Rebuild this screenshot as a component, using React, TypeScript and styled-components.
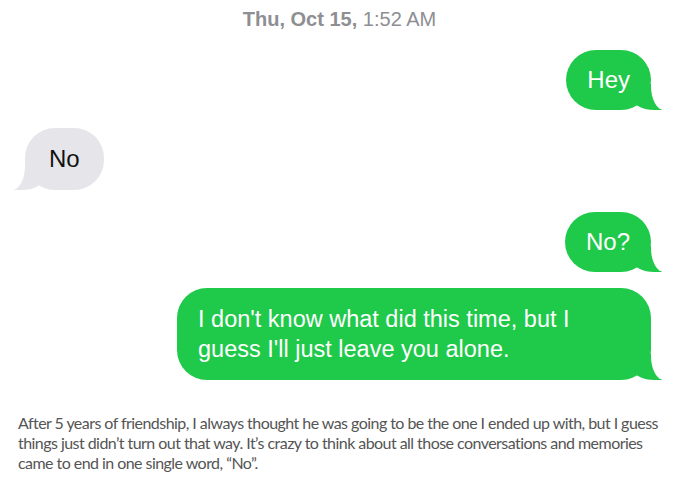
import * as React from 'react'
import styled, { createGlobalStyle } from 'styled-components'

const GlobalStyle = createGlobalStyle`
	html, body {
		margin: 0;
		padding: 0;
		background: #ffffff;
	}
`

const GREEN = '#1fc94a'
const GRAY = '#e5e5ea'

const Page = styled.div`
	width: 679px;
	height: 490px;
	overflow: hidden;
	background: #ffffff;
	font-family: 'Liberation Sans', Arial, sans-serif;
`

const Timestamp = styled.div`
	padding-top: 6px;
	height: 26px;
	text-align: center;
	font-size: 20px;
	line-height: 26px;
	color: #8e8e93;

	b {
		font-weight: 700;
	}
`

const Thread = styled.div`
	display: flex;
	flex-direction: column;
	padding: 0 28px 0 25px;
`

type RowProps = { $mine: boolean; $gap: number }
const Row = styled.div<RowProps>`
	display: flex;
	justify-content: ${props => (props.$mine ? 'flex-end' : 'flex-start')};
	margin-top: ${props => props.$gap}px;
`

// bubble with an iMessage style tail drawn by two pseudo elements
type BubbleProps = { $mine: boolean; $width?: number }
const Bubble = styled.div<BubbleProps>`
	position: relative;
	box-sizing: border-box;
	${props => (props.$width ? `width: ${props.$width}px;` : '')}
	padding: ${props => (props.$mine ? '16px 21px' : '17px 24px')};
	border-radius: 30px;
	background: ${props => (props.$mine ? GREEN : GRAY)};
	color: ${props => (props.$mine ? '#ffffff' : '#111111')};
	font-size: 24px;
	line-height: 28px;

	&::before {
		content: '';
		position: absolute;
		bottom: 0;
		${props => (props.$mine ? 'right: -11px;' : 'left: -11px;')}
		width: 28px;
		height: 26px;
		background: ${props => (props.$mine ? GREEN : GRAY)};
		${props =>
			props.$mine
				? 'border-bottom-left-radius: 20px 10px;'
				: 'border-bottom-right-radius: 20px 10px;'}
		z-index: 0;
	}

	&::after {
		content: '';
		position: absolute;
		bottom: 0;
		${props => (props.$mine ? 'right: -24px;' : 'left: -24px;')}
		width: 24px;
		height: 28px;
		background: #ffffff;
		${props =>
			props.$mine
				? 'border-bottom-left-radius: 13px 24px;'
				: 'border-bottom-right-radius: 13px 24px;'}
		z-index: 1;
	}
`

const BubbleText = styled.span`
	position: relative;
	z-index: 2;
`

const LongText = styled(BubbleText)`
	display: block;
	font-size: 23.5px;
	line-height: 30px;
`

const Caption = styled.p`
	margin: 33px 0 0;
	padding: 0 18px;
	font-family: Lato, 'Open Sans', sans-serif;
	font-size: 16px;
	line-height: 20px;
	letter-spacing: -0.55px;
	color: #555555;
`

const messages = [
	{ mine: true, gap: 18, text: 'Hey' },
	{ mine: false, gap: 18, text: 'No' },
	{ mine: true, gap: 22, text: 'No?' },
]

export default function App() {
	return (
		<Page>
			<GlobalStyle />
			<Timestamp>
				<b>Thu, Oct 15,</b> 1:52 AM
			</Timestamp>
			<Thread>
				{messages.map((m, i) => (
					<Row key={i} $mine={m.mine} $gap={m.gap}>
						<Bubble $mine={m.mine}>
							<BubbleText>{m.text}</BubbleText>
						</Bubble>
					</Row>
				))}
				<Row $mine $gap={16}>
					<Bubble $mine $width={474}>
						<LongText>
							I don't know what did this time, but I guess I'll just leave you
							alone.
						</LongText>
					</Bubble>
				</Row>
			</Thread>
			<Caption>
				After 5 years of friendship, I always thought he was going to be the one
				I ended up with, but I guess things just didn’t turn out that way. It’s
				crazy to think about all those conversations and memories came to end in
				one single word, “No”.
			</Caption>
		</Page>
	)
}
